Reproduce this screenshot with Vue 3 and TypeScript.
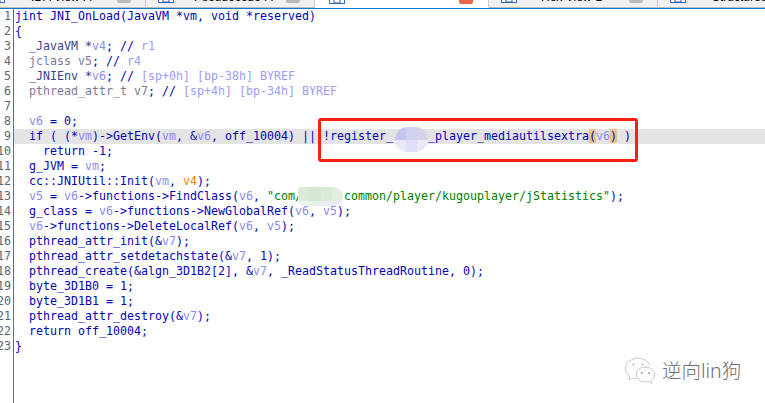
<script setup lang="ts">
interface Token { c: string; t: string }
interface Line { n: number; tokens: Token[]; active: boolean }

const source: string[] = [
  'jint JNI_OnLoad(JavaVM *vm, void *reserved)',
  '{',
  '  {d:_JavaVM} {d:*}{v:v4}; // {r:r1}',
  '  {g:jclass} {g:v5}; // {r:r4}',
  '  {d:_JNIEnv} {d:*}{v:v6}; // {r:[sp+0h] [bp-38h] BYREF}',
  '  {g:pthread_attr_t} {g:v7}; // {r:[sp+4h] [bp-34h] BYREF}',
  '',
  '  {v:v6} = 0;',
  '  if ( (*{v:vm})->GetEnv({v:vm}, &{v:v6}, off_10004) || !register_     _player_mediautilsextra{h:(}{v:v6}{h:)} )',
  '    return -1;',
  '  g_JVM = {v:vm};',
  '  cc::JNIUtil::Init({v:vm}, {o:v4});',
  '  {v:v5} = {v:v6}->functions->FindClass({v:v6}, {s:"com/      common/player/kugouplayer/jStatistics"});',
  '  g_class = {v:v6}->functions->NewGlobalRef({v:v6}, {v:v5});',
  '  {v:v6}->functions->DeleteLocalRef({v:v6}, {v:v5});',
  '  pthread_attr_init(&{v:v7});',
  '  pthread_attr_setdetachstate(&{v:v7}, 1);',
  '  pthread_create(&algn_3D1B2[2], &{v:v7}, _ReadStatusThreadRoutine, 0);',
  '  byte_3D1B0 = 1;',
  '  byte_3D1B1 = 1;',
  '  pthread_attr_destroy(&{v:v7});',
  '  return off_10004;',
  '}',
]

function parse(src: string): Token[] {
  const out: Token[] = []
  const re = /\{([a-z]):([^}]*)\}/g
  let last = 0
  let m: RegExpExecArray | null
  while ((m = re.exec(src))) {
    if (m.index > last) out.push({ c: 'b', t: src.slice(last, m.index) })
    out.push({ c: m[1], t: m[2] })
    last = m.index + m[0].length
  }
  if (last < src.length) out.push({ c: 'b', t: src.slice(last) })
  return out
}

const lines: Line[] = source.map((s, i) => ({ n: i + 1, tokens: parse(s), active: i === 8 }))

const tabs = [
  { label: 'IDA View-A', active: false, gap: 26 },
  { label: 'Pseudocode-A', active: false, gap: 20 },
  { label: '', active: true, gap: 0 },
  { label: 'Hex View-1', active: false, gap: 24 },
  { label: 'Structures', active: false, gap: 26 },
]

const blurA = ['#c6c5ee', '#cdd3ee', '#d4d3ea', '#e9e6f7', '#dedff8', '#eaeaf6']
const blurB = ['#dcebd9', '#d4e7d2', '#d9ead7', '#e4efe2', '#eef5ec', '#e6f1e8', '#e9eef5', '#e8edf7']
</script>

<template>
  <div class="page">
    <div class="tabbar">
      <div v-for="tab in tabs" :key="tab.label" class="tab" :class="{ active: tab.active }">
        <svg class="tab-icon" width="16" height="12" viewBox="0 0 16 12">
          <rect x="0.5" y="0.5" width="15" height="11" fill="#fff" stroke="#2f6fd0" />
          <rect x="5" y="4" width="6" height="7" fill="#fff" stroke="#3a5a90" />
        </svg>
        <span class="tab-label" :style="{ marginLeft: tab.gap + 'px' }">{{ tab.label }}</span>
        <span class="tab-close"></span>
      </div>
    </div>
    <div class="editor">
      <div class="gutter">
        <div v-for="l in lines" :key="l.n" class="num">{{ l.n }}</div>
      </div>
      <div class="code">
        <div v-for="l in lines" :key="l.n" class="row" :class="{ hl: l.active }">
          <span v-for="(tk, i) in l.tokens" :key="i" :class="tk.c">{{ tk.t }}</span>
        </div>
      </div>
    </div>

    <div class="blur blur-a">
      <i v-for="(c, i) in blurA" :key="i" :style="{ background: c }"></i>
    </div>
    <div class="blur blur-b">
      <i v-for="(c, i) in blurB" :key="i" :style="{ background: c }"></i>
    </div>
    <div class="redbox"></div>

    <div class="mark">
      <svg class="mark-icon" width="34" height="28" viewBox="0 0 34 28" fill="none" stroke="#c0c0c0" stroke-width="0.9">
        <path d="M26 9C24.8 4.5 20 1.2 14.3 1.2 7.5 1.2 1.5 5.7 1.5 11.6c0 3.2 1.7 6 4.4 8l-1 3.4 3.9-2c1.2.4 2.4.6 3.7.7" />
        <path d="M21.5 10C16.5 10 12.4 13.3 12.4 17.5S16.5 25 21.5 25c1.1 0 2.1-.2 3.1-.5l3.3 1.8-.9-2.900c2.200-1.400 3.600-3.500 3.600-5.900 0-4.200-4-7.500-9.600-7.500Z" />
        <circle cx="9.5" cy="7.500" r="1" fill="#b4b4b4" stroke="none" />
        <circle cx="18.5" cy="7.500" r="1" fill="#b4b4b4" stroke="none" />
        <circle cx="18" cy="16" r="0.9" fill="#999" stroke="none" />
        <circle cx="25" cy="16" r="0.9" fill="#999" stroke="none" />
      </svg>
      <span class="mark-text">逆向lin狗</span>
    </div>
  </div>
</template>

<style>
html, body { margin: 0; background: #fff; }
</style>

<style scoped>
.page {
  position: relative;
  width: 765px;
  height: 403px;
  overflow: hidden;
  background: #fff;
}
.tabbar {
  display: flex;
  height: 8px;
  margin-left: -23px;
  border-bottom: 1px solid #0a78d0;
  overflow: hidden;
}
.tab {
  flex: 0 0 169px;
  box-sizing: border-box;
  height: 8px;
  padding: 0 14px 4px 12px;
  display: flex;
  align-items: flex-end;
  background: #f0f0f0;
  border-right: 1px solid #c8c8c8;
  border-bottom: 1px solid #bdbdbd;
}
.tab.active {
  flex-basis: 174px;
  background: #fff;
  border-right: 1px solid #d0d0d0;
  border-bottom: 0;
  padding-left: 14px;
  padding-right: 15px;
}
.tab-icon { flex: none; }
.tab-label {
  flex: 1;
  font: 12px/12px "Liberation Sans", sans-serif;
  color: #000;
  white-space: nowrap;
  overflow: hidden;
}
.tab-close {
  flex: none;
  width: 14px;
  height: 12px;
  border-radius: 2px;
  background: #b9b9b9;
}
.tab.active .tab-close { background: #e8654c; }
.editor {
  display: flex;
  height: 394px;
}
.gutter {
  flex: none;
  width: 13px;
  border-right: 1px solid #1d82d4;
  overflow: hidden;
}
.num, .row {
  height: 15px;
  font: 11.63px/15px "DejaVu Sans Mono", monospace;
  white-space: pre;
}
.num {
  display: flex;
  justify-content: flex-end;
  padding-right: 2px;
  color: #5c6670;
}
.code { flex: 1; min-width: 0; }
.row { padding-left: 1px; }
.row.hl { background: #e4e4e4; }
.b { color: #0404b4; }
.d { color: #38448c; }
.g { color: #7c7c98; }
.v { color: #8a8af4; }
.r { color: #9c9cf8; }
.o { color: #f08000; }
.s { color: #008000; }
.h { color: #0404b4; background: #e4c48c; }
.blur {
  position: absolute;
  display: grid;
  overflow: hidden;
}
.blur i { display: block; }
.blur-a {
  left: 395px;
  top: 127px;
  width: 33px;
  height: 25px;
  grid-template-columns: repeat(3, 1fr);
  grid-template-rows: repeat(2, 1fr);
  border-radius: 13px;
}
.blur-b {
  left: 298px;
  top: 187px;
  width: 45px;
  height: 19px;
  grid-template-columns: repeat(4, 1fr);
  grid-template-rows: 14px 5px;
  border-radius: 3px 14px 14px 8px;
}
.redbox {
  position: absolute;
  left: 318px;
  top: 118px;
  width: 320px;
  height: 44px;
  box-sizing: border-box;
  border: 3px solid #fb2014;
  border-radius: 3px;
}
.mark {
  position: absolute;
  left: 624px;
  top: 357px;
  display: flex;
  align-items: center;
  gap: 4px;
}
.mark-icon { flex: none; }
.mark-text {
  font: 300 19.5px/24px "Noto Sans", "Noto Sans CJK SC", sans-serif;
  color: #6e6e6e;
  white-space: nowrap;
}
</style>
